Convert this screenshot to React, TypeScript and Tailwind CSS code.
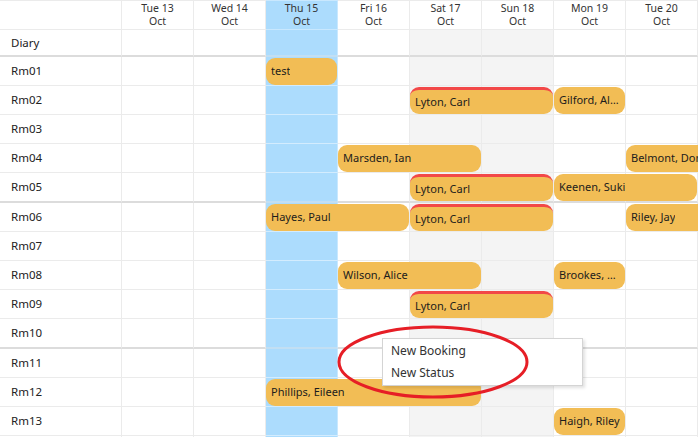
import React from "react";

type Day = { label: string; month: string; today?: boolean; weekend?: boolean };
type Booking = { start: number; span: number; name: string; alert?: boolean; open?: boolean };
type Row = { label: string; diary?: boolean; thick?: boolean; bookings?: Booking[] };

const days: Day[] = [
  { label: "Tue 13", month: "Oct" },
  { label: "Wed 14", month: "Oct" },
  { label: "Thu 15", month: "Oct", today: true },
  { label: "Fri 16", month: "Oct" },
  { label: "Sat 17", month: "Oct", weekend: true },
  { label: "Sun 18", month: "Oct", weekend: true },
  { label: "Mon 19", month: "Oct" },
  { label: "Tue 20", month: "Oct" },
];

const colStart = ["col-start-2", "col-start-3", "col-start-4", "col-start-5", "col-start-6", "col-start-7", "col-start-8", "col-start-9"];
const colSpan = ["col-span-1", "col-span-1", "col-span-2", "col-span-3"];

const rows: Row[] = [
  { label: "Diary", diary: true, thick: true },
  { label: "Rm01", bookings: [{ start: 2, span: 1, name: "test" }] },
  {
    label: "Rm02",
    bookings: [
      { start: 4, span: 2, name: "Lyton, Carl", alert: true },
      { start: 6, span: 1, name: "Gilford, Alan" },
    ],
  },
  { label: "Rm03" },
  {
    label: "Rm04",
    bookings: [
      { start: 3, span: 2, name: "Marsden, Ian" },
      { start: 7, span: 1, name: "Belmont, Don", open: true },
    ],
  },
  {
    label: "Rm05",
    thick: true,
    bookings: [
      { start: 4, span: 2, name: "Lyton, Carl", alert: true },
      { start: 6, span: 2, name: "Keenen, Suki" },
    ],
  },
  {
    label: "Rm06",
    bookings: [
      { start: 2, span: 2, name: "Hayes, Paul" },
      { start: 4, span: 2, name: "Lyton, Carl", alert: true },
      { start: 7, span: 1, name: "Riley, Jay", open: true },
    ],
  },
  { label: "Rm07" },
  {
    label: "Rm08",
    bookings: [
      { start: 3, span: 2, name: "Wilson, Alice" },
      { start: 6, span: 1, name: "Brookes, Tom" },
    ],
  },
  { label: "Rm09", bookings: [{ start: 4, span: 2, name: "Lyton, Carl", alert: true }] },
  { label: "Rm10", thick: true },
  { label: "Rm11" },
  { label: "Rm12", bookings: [{ start: 2, span: 3, name: "Phillips, Eileen" }] },
  { label: "Rm13", bookings: [{ start: 6, span: 1, name: "Haigh, Riley" }] },
  { label: "Rm14" },
];

const BookingBar: React.FC<{ b: Booking; thick?: boolean }> = ({ b, thick }) => (
  <div
    className={`row-start-1 ${colStart[b.start]} ${colSpan[b.span]} z-10 mt-px ${thick ? "mb-[2px]" : "mb-px"} ${
      b.open ? "-mr-[40px]" : "mr-px"
    } flex min-w-0 items-center rounded-[9px] bg-[#f2bd55] px-[5px] text-[11px] text-[#1c1c1c] ${
      b.alert ? "border-t-[3px] border-[#f24848]" : ""
    }`}
  >
    <span className="truncate">{b.name}</span>
  </div>
);

export default function App() {
  return (
    <div className="relative h-[437px] w-[698px] overflow-hidden bg-white font-['Noto_Sans',sans-serif] text-[#222]">
      {/* header */}
      <div className="grid h-[30px] grid-cols-[122px_repeat(8,72px)]">
        <div className="border-t border-r border-b border-[#ebebeb]" />
        {days.map((d) => (
          <div
            key={d.label}
            className={`flex flex-col items-center justify-center border-t border-r border-b text-[10.5px] leading-[13px] text-[#333] ${
              d.today ? "border-[#c9e8fe] bg-[#acdcfd]" : "border-[#ebebeb]"
            }`}
          >
            <span>{d.label}</span>
            <span>{d.month}</span>
          </div>
        ))}
      </div>

      {/* rows */}
      {rows.map((r) => (
        <div
          key={r.label}
          className={`grid grid-cols-[122px_repeat(8,72px)] ${
            r.diary ? "h-[27px]" : r.thick ? "h-[30px]" : "h-[29px]"
          }`}
        >
          <div
            className={`col-start-1 row-start-1 flex items-center border-r pl-[11px] text-[11.5px] ${
              r.thick ? "border-b-2 border-b-[#dcdcdc]" : "border-b border-b-[#ebebeb]"
            } border-r-[#ebebeb]`}
          >
            {r.label}
          </div>
          {days.map((d, i) => (
            <div
              key={d.label}
              className={`row-start-1 ${colStart[i]} border-r ${
                r.thick ? "border-b-2" : "border-b"
              } ${
                d.today
                  ? "border-r-[#c9e8fe] bg-[#acdcfd] " + (r.thick ? "border-b-[#c2dff3]" : "border-b-[#d3ecfe]")
                  : (d.weekend ? "bg-[#f4f4f4] " : "") +
                    "border-r-[#ebebeb] " +
                    (r.thick ? "border-b-[#dcdcdc]" : "border-b-[#ebebeb]")
              }`}
            />
          ))}
          {r.bookings?.map((b) => (
            <BookingBar key={b.name + b.start} b={b} thick={r.thick} />
          ))}
        </div>
      ))}

      {/* context menu */}
      <div className="absolute left-[382px] top-[338px] z-20 w-[201px] border border-[#d4d4d4] bg-white py-[1px] text-[12px] text-[#333] shadow-[2px_2px_3px_rgba(0,0,0,0.12)]">
        <div className="flex h-[22px] items-center pl-[8px]">New Booking</div>
        <div className="flex h-[22px] items-center pl-[8px]">New Status</div>
      </div>

      {/* highlight ring */}
      <svg className="pointer-events-none absolute left-0 top-0 z-30" width="698" height="437">
        <ellipse cx="433" cy="362" rx="94" ry="35" fill="none" stroke="#e61e26" strokeWidth="3" />
      </svg>
    </div>
  );
}
